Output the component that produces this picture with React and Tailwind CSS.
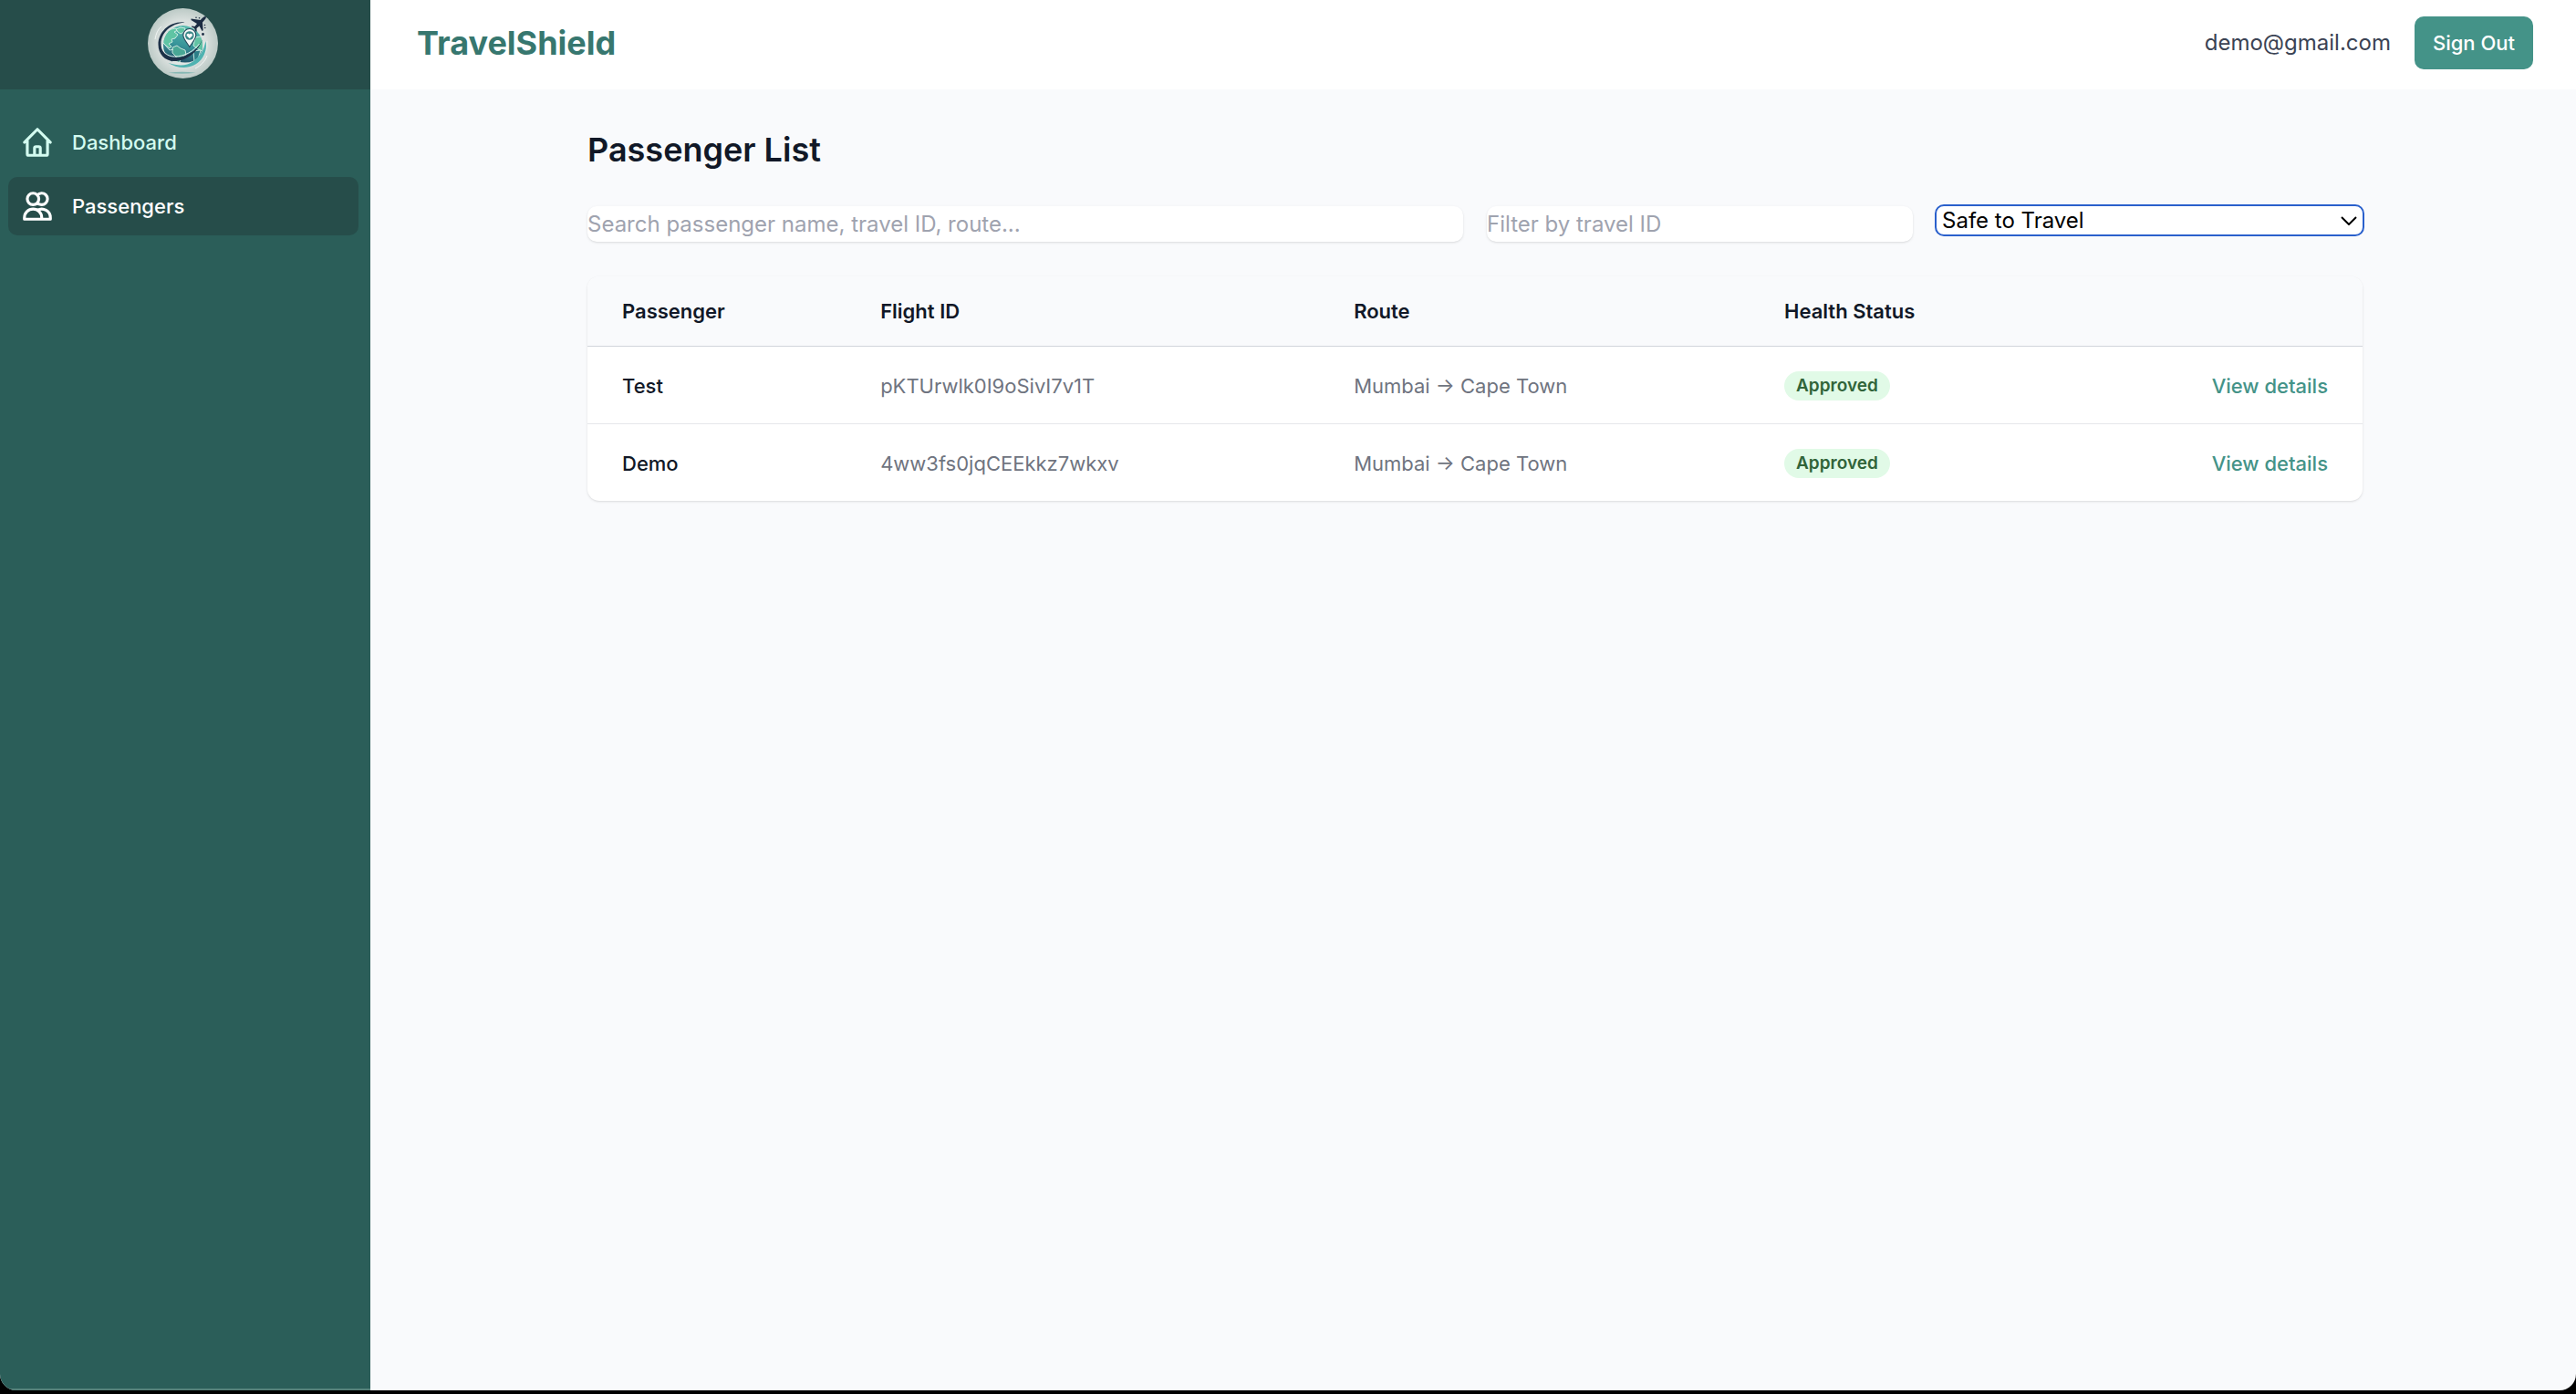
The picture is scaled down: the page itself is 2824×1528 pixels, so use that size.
import React, { useState } from "react";

const passengers = [
  { name: "Test", flight: "pKTUrwlk0I9oSivI7v1T", route: "Mumbai → Cape Town", status: "Approved" },
  { name: "Demo", flight: "4ww3fs0jqCEEkkz7wkxv", route: "Mumbai → Cape Town", status: "Approved" },
];

function Logo() {
  return (
    <svg viewBox="0 0 77 77" className="size-[77px]" role="img" aria-label="TravelShield logo">
      <defs>
        <radialGradient id="disc" cx="50%" cy="50%" r="50%">
          <stop offset="0" stopColor="#e8edec" />
          <stop offset="0.65" stopColor="#dae0de" />
          <stop offset="1" stopColor="#bccac6" />
        </radialGradient>
        <linearGradient id="ocean" x1="0.6" y1="0" x2="0.4" y2="1">
          <stop offset="0" stopColor="#58bbae" />
          <stop offset="0.5" stopColor="#38959a" />
          <stop offset="1" stopColor="#1f4860" />
        </linearGradient>
        <clipPath id="globe">
          <circle cx="38.500" cy="40.500" r="21.500" />
        </clipPath>
      </defs>
      <circle cx="38.500" cy="38.500" r="38.500" fill="url(#disc)" />
      <circle cx="38.500" cy="40.500" r="21.500" fill="url(#ocean)" />
      <g clipPath="url(#globe)" stroke="#d9f0e8" strokeWidth="0.900" strokeLinejoin="round">
        <path d="M17 38c0-7 4-13 9-15l4-1 3 2-4 2 4 3-3 4-4 1 1 3-4 2 3 3-2 2-4-3z" fill="#5fc4a4" />
        <path d="M31 23l5-2 5 1-1 4-4 2-3-2z" fill="#5fc4a4" />
        <path d="M27 43l5-2 4 3 5 2 1 5-5 3-2 5-3 1-1-7-4-4z" fill="#49a795" />
        <path d="M52 32l6-1 4 8-2 8-5-2-5-4z" fill="#62c3a4" />
        <path d="M50 47l8-1-3 10-4 3z" fill="#2d7f88" />
        <path d="M17 38l7 8 4-1" fill="none" />
      </g>
      <path d="M64 36c1 14-9 25.500-23 25.500-5 0-10-1-14-3" fill="none" stroke="#dfe6e4" strokeWidth="4" />
      <path d="M40.500 15.500C24 14 11.500 26 11.500 40c0 10 7 18 17.500 18 14 0 26-10 31-24-5 12-17 20-29.500 20C21 54 14.500 48 14.500 39 14.500 27 25 17 40.500 15.500z" fill="#1d3148" />
      <path d="M15.500 40c0 8 6 13 14 13 11 0 21-6 27-14" fill="none" stroke="#f4f7f6" strokeWidth="0.900" />
      <path d="M63.500 36c3 15-8 29-24 29-6 0-12-2-17-5 11 3.500 20 3.500 27-1.500 8-5.500 12-12.500 14-22.500z" fill="#4fb3b1" />
      <path d="M45.800 42.500c-3-5-7-9-7-13a7 7 0 0 1 14 0c0 4-4 8-7 13z" fill="#f7faf9" stroke="#22475a" strokeWidth="1.100" />
      <circle cx="45.800" cy="30" r="4.800" fill="#3b8789" />
      <path d="M45.800 33.200l-3-3c-1-2 2-3.500 3-1.500 1-2 4-.5 3 1.500z" fill="#f7faf9" />
      <path d="M63.500 9c-2 0-4.200 2.200-5.700 4l-10.300-1.500v1.500l6.500 4-2.500 3-3.500-.5 0 1 3 1.500 1.500 3.500 1.200 0-.2-3.500 3-2.500 3 5.500 1.200-.8-.7-8.700 3-3.500c.8-1 1.300-2.700.5-3z" fill="#1c2c42" />
      <g fill="#1c2c42">
        <circle cx="53" cy="10.300" r="0.800" />
        <circle cx="56.500" cy="10.800" r="0.800" />
        <circle cx="62.500" cy="18.500" r="0.800" />
        <circle cx="62.800" cy="21.500" r="0.800" />
        <circle cx="60.500" cy="28.500" r="1.400" />
      </g>
      <path d="M8 34c1-6 3-11 7-14M52 66c6-3 11-8 13-14" fill="none" stroke="#f4f7f6" strokeWidth="0.900" />
      <path d="M22.500 70.800q15-2 30 0-15 2-30 0z" fill="#86b8b4" />
    </svg>
  );
}

function NavIcon({ d }) {
  return (
    <svg viewBox="0 0 24 24" className="size-[38px] shrink-0" fill="none" stroke="currentColor" strokeWidth="2" strokeLinecap="round" strokeLinejoin="round" aria-hidden="true">
      <path d={d} />
    </svg>
  );
}

const HOME =
  "M3 12l2-2m0 0l7-7 7 7M5 10v10a1 1 0 001 1h3m10-11l2 2m-2-2v10a1 1 0 01-1 1h-3m-6 0a1 1 0 001-1v-4a1 1 0 011-1h2a1 1 0 011 1v4a1 1 0 001 1m-6 0h6";
const USERS =
  "M12 4.354a4 4 0 110 5.292M15 21H3v-1a6 6 0 0112 0v1zm0 0h6v-1a6 6 0 00-9-5.197M13 7a4 4 0 11-8 0 4 4 0 018 0z";

const navItem = "flex h-16 items-center gap-[19px] rounded-[10px] px-[13px] text-[22px] font-medium";
const field =
  "h-[39px] w-full rounded-[10px] bg-white text-[24px] leading-[39px] shadow-sm outline-none placeholder:text-[#9fa3af]";
const th = "px-[38px] py-[22px] text-left font-semibold text-[#111827]";
const td = "px-[38px] pt-[27px] pb-[25px]";

export default function App() {
  const [search, setSearch] = useState("");
  const [travelId, setTravelId] = useState("");
  const [status, setStatus] = useState("safe");

  return (
    <div className="h-screen bg-black pb-1 font-['Inter','Liberation_Sans',sans-serif]">
      <div className="flex h-full overflow-hidden rounded-b-[18px] bg-[#f9fafc]">
        <aside className="flex w-[406px] shrink-0 flex-col border-b-2 border-[#558079] bg-[#2b5e59]">
          <div className="flex h-[98px] items-center justify-center bg-[#264d4a] pr-[6px] pb-1">
            <Logo />
          </div>
          <nav className="flex flex-col gap-[6px] pt-[26px] pr-[13px] pl-[9px]">
            <a href="#dashboard" className={navItem + " text-[#d3fbf0]"}>
              <NavIcon d={HOME} />
              Dashboard
            </a>
            <a href="#passengers" aria-current="page" className={navItem + " bg-[#264d4a] text-white"}>
              <NavIcon d={USERS} />
              Passengers
            </a>
          </nav>
        </aside>

        <div className="flex min-w-0 flex-1 flex-col">
          <header className="flex h-[98px] items-center justify-between bg-white pr-[47px] pb-1 pl-[51px]">
            <h1 className="text-[36px] font-bold text-[#37776f]">TravelShield</h1>
            <div className="flex items-center gap-[26px]">
              <span className="text-[24px] text-[#3b4354]">demo@gmail.com</span>
              <button type="button" className="h-[58px] rounded-[10px] bg-[#449388] px-5 text-[22px] font-medium text-white">
                Sign Out
              </button>
            </div>
          </header>

          <main className="mx-auto w-full max-w-[2026px] pt-10 pr-[38px] pl-[42px]">
            <h2 className="text-[36px] leading-[52px] font-semibold text-[#111827]">Passenger List</h2>

            <div className="mt-9 grid grid-cols-4 items-start gap-[26px]">
              <div className="col-span-2">
                <input
                  type="text"
                  aria-label="Search passengers"
                  value={search}
                  onChange={(e) => setSearch(e.target.value)}
                  placeholder="Search passenger name, travel ID, route..."
                  className={field}
                />
              </div>
              <input
                type="text"
                aria-label="Filter by travel ID"
                value={travelId}
                onChange={(e) => setTravelId(e.target.value)}
                placeholder="Filter by travel ID"
                className={field}
              />
              <div className="grid items-center">
                <select
                  aria-label="Health status filter"
                  value={status}
                  onChange={(e) => setStatus(e.target.value)}
                  className="col-start-1 row-start-1 h-[31px] w-full appearance-none rounded-[8px] bg-white pl-[6px] text-[24px] leading-[31px] text-black outline-2 outline-[#2a60cc]"
                >
                  <option value="safe">Safe to Travel</option>
                  <option value="all">All Statuses</option>
                </select>
                <svg viewBox="0 0 18 10" className="pointer-events-none col-start-1 row-start-1 mr-[6px] h-[10px] w-[18px] justify-self-end" fill="none" stroke="#000" strokeWidth="2" aria-hidden="true">
                  <path d="M1 1l8 8 8-8" />
                </svg>
              </div>
            </div>

            <div className="mt-[38px] overflow-hidden rounded-[13px] bg-white shadow">
              <table className="w-full table-fixed text-[22px] leading-8">
                <colgroup>
                  <col className="w-[14.55%]" />
                  <col className="w-[26.67%]" />
                  <col className="w-[24.25%]" />
                  <col className="w-[17%]" />
                  <col />
                </colgroup>
                <thead className="border-b border-[#d1d5db] bg-[#f9fafc]">
                  <tr>
                    <th scope="col" className={th}>Passenger</th>
                    <th scope="col" className={th}>Flight ID</th>
                    <th scope="col" className={th}>Route</th>
                    <th scope="col" className={th}>Health Status</th>
                    <th scope="col" className={th} aria-label="Actions" />
                  </tr>
                </thead>
                <tbody className="divide-y divide-[#e5e7eb]">
                  {passengers.map((p) => (
                    <tr key={p.flight}>
                      <td className={td + " font-medium text-[#111827]"}>{p.name}</td>
                      <td className={td + " text-[#6f7480]"}>{p.flight}</td>
                      <td className={td + " text-[#6f7480]"}>{p.route}</td>
                      <td className={td}>
                        <span className="flex h-8 w-fit items-center rounded-full bg-[#e1fae7] px-[13px] text-[19px] font-semibold text-[#31643a]">
                          {p.status}
                        </span>
                      </td>
                      <td className={td + " text-right font-medium"}>
                        <a href="#details" className="text-[#449388]">View details</a>
                      </td>
                    </tr>
                  ))}
                </tbody>
              </table>
            </div>
          </main>
        </div>
      </div>
    </div>
  );
}
